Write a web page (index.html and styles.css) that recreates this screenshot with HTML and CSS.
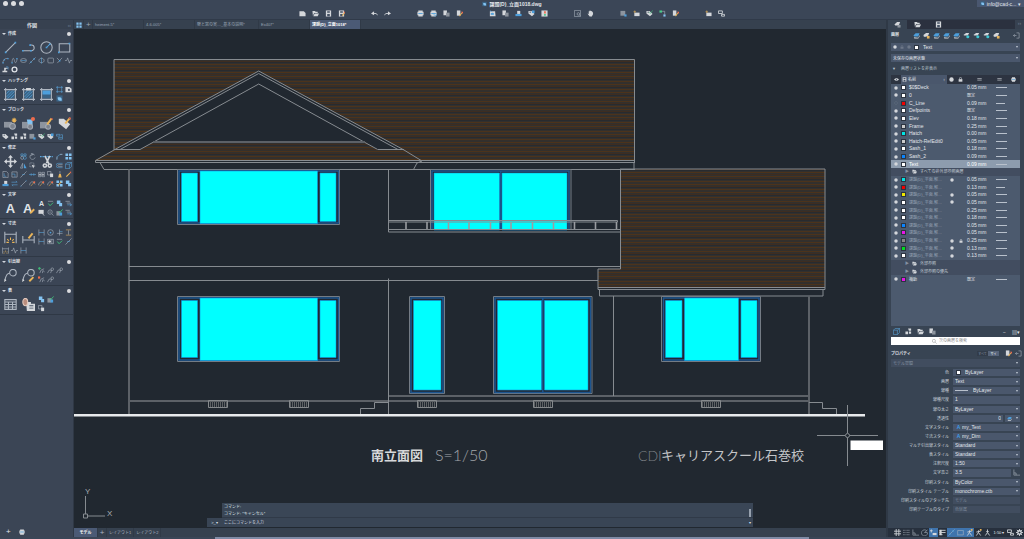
FILE: index.html
```html
<!DOCTYPE html>
<html lang="ja">
<head>
	<meta charset="UTF-8">
	<title>課題(D)_立面1018.dwg</title>
	<link rel="stylesheet" href="styles.css">
	<script src="tools.js" defer></script>
</head>
<body>
<svg class="sprite" aria-hidden="true">
	<!-- draw -->
	<symbol id="line" viewBox="0 0 16 16"><path d="M2 14 14 2"/><path class="bf" d="M1 13h2v2H1zM13 1h2v2h-2z"/></symbol>
	<symbol id="pline" viewBox="0 0 16 16"><path d="M1 12h10.500a3.500 3.500 0 0 0 0-7H10"/><path class="bf" d="M0 11h2v2H0zM9 4h2v2H9zM10 11h2v2h-2z"/></symbol>
	<symbol id="circle" viewBox="0 0 16 16"><circle cx="8" cy="8" r="7"/><path class="b" d="m8 8 4-4"/><path class="bf" d="M7 7h2v2H7zM11 3h2v2h-2z"/></symbol>
	<symbol id="rect" viewBox="0 0 16 16"><path d="M1.500 3.500h13v10h-13z"/><path class="bf" d="M0 13h2v2H0zM13 2h2v2h-2z"/></symbol>
	<symbol id="arc" viewBox="0 0 16 16"><path d="M2 14C2 7 6 3 13 3"/><path class="bf" d="M1 12h3v3H1zM12 2h3v3h-3zM4 5h3v3H4z"/></symbol>
	<symbol id="spline" viewBox="0 0 16 16"><path d="M2 13C4-3 7 4 8 9s4 7 6-5"/><path class="bf" d="M1 12h3v3H1zM12 2h3v3h-3z"/></symbol>
	<symbol id="ellipse" viewBox="0 0 16 16"><ellipse cx="8" cy="8" rx="7" ry="4.500"/><path class="b" d="M2 8h12"/></symbol>
	<symbol id="xline" viewBox="0 0 16 16"><path d="M1 15 15 1"/><path class="bf" d="M3 10h3v3H3zM10 3h3v3h-3z"/></symbol>
	<symbol id="earc" viewBox="0 0 16 16"><path d="M8 3c8 0 8 10 0 10S0 3 8 3"/><path class="b" d="M8 1v14"/></symbol>
	<symbol id="poly" viewBox="0 0 16 16"><path d="M4 2.500h9a2 2 0 0 1 2 2v7a2 2 0 0 1-2 2H4a2 2 0 0 1-2-2v-7a2 2 0 0 1 2-2z"/></symbol>
	<symbol id="ray" viewBox="0 0 16 16"><path d="m2 2 6 6 6-6M8 8l-5 6"/><path class="bf" d="M7 7h3v3H7z"/></symbol>
	<symbol id="zig" viewBox="0 0 16 16"><path d="M0 8h4l2-6 4 12 2-6h4"/></symbol>
	<symbol id="plane" viewBox="0 0 16 16"><path class="wf" d="M5 4h8v2H9l-1 5h4v3H1v-3h4z"/><path class="b" d="M9 2h5v6"/></symbol>
	<symbol id="donut" viewBox="0 0 16 16"><circle class="ringw" cx="8" cy="8" r="5.500"/></symbol>
	<!-- hatch -->
	<symbol id="hatch" viewBox="0 0 16 16"><path class="bd" d="M3 3h10v10H3z"/><path d="M2 0v16M14 0v16M0 2h16M0 14h16"/><path class="b thin" d="m3 7 4-4M3 11l8-8M4 13l9-9M8 13l5-5"/></symbol>
	<symbol id="hatchp" viewBox="0 0 16 16"><use href="#hatch"/><path class="wf" d="M5 0h6v3H5z"/></symbol>
	<symbol id="grad" viewBox="0 0 16 16"><path class="bd" d="M3 3h10v10H3z"/><path class="bf" d="M3 3h10v5H3z"/><path d="M2 0v16M14 0v16M0 2h16M0 14h16"/></symbol>
	<symbol id="bound" viewBox="0 0 16 16"><path class="b" d="M3 0v16M13 0v16M0 3h16M0 13h16"/></symbol>
	<symbol id="wipe" viewBox="0 0 16 16"><path class="wf" d="M1 2h9l5 4v8H1z"/><circle class="df" cx="9" cy="9" r="2.500"/></symbol>
	<symbol id="region" viewBox="0 0 16 16"><path class="bd" d="M1 1h14v14H1z"/><path class="lf" d="M4 5h5a4 4 0 0 1 4 4v4H9a5 5 0 0 1-5-5z"/></symbol>
	<!-- blocks -->
	<symbol id="blk" viewBox="0 0 16 16"><path class="gf" d="M0 6h10v7H0z"/><circle class="gk" cx="10.500" cy="11.500" r="3.500"/><path class="o" d="M12.500 1v6M9.500 4h6M10.500 2l4 4M14.500 2l-4 4"/></symbol>
	<symbol id="blkc" viewBox="0 0 16 16"><path class="gf" d="M0 6h9v8H0z"/><path class="lf" d="M6 3h7v8l-3 3H8z"/><circle class="gk" cx="10" cy="12" r="3"/><circle class="rf" cx="13.500" cy="2.500" r="2.500"/></symbol>
	<symbol id="blke" viewBox="0 0 16 16"><path class="gf" d="M0 6h10v8H0z"/><circle class="gk" cx="10" cy="12" r="3"/><path class="o pen" d="m9 9 5-7"/><path class="rf" d="m13 1 3 1-1 2z"/></symbol>
	<symbol id="tage" viewBox="0 0 16 16"><path class="wf" d="M1 2h6l8 7-5 6-9-7z"/><path class="o pen" d="m9 8 5-6"/><path class="rf" d="m13 0 3 1-1 3z"/></symbol>
	<symbol id="tag" viewBox="0 0 16 16"><path class="wf" d="M1 2h7l7 7-6 5-8-6z"/><circle class="df" cx="5" cy="5" r="1.500"/></symbol>
	<symbol id="tags" viewBox="0 0 16 16"><path class="wf" d="M7 1h7v5H9zM1 8h6v6H1zM9 8h5v5H9z"/></symbol>
	<symbol id="blkp" viewBox="0 0 16 16"><path class="gf" d="M1 2h11v11H1z"/><path class="bf" d="M10 10h5v5h-5z"/></symbol>
	<symbol id="tagg" viewBox="0 0 16 16"><use href="#tag"/><path class="g" d="m7 5 3 3 5-7"/></symbol>
	<symbol id="tagb" viewBox="0 0 16 16"><use href="#tag"/><path class="bf" d="M9 1h6v6H9z"/></symbol>
	<symbol id="rel" viewBox="0 0 16 16"><path class="b" d="M1 3h8v4H1zM6 10h9v4H6zM11 4h4v6"/></symbol>
	<!-- modify -->
	<symbol id="move" viewBox="0 0 16 16"><path class="w2" d="M8 2v12M2 8h12"/><path class="wf" d="m8 0 3 3.500H5zM8 16l3-3.500H5zM0 8l3.500-3v6zM16 8l-3.500-3v6z"/></symbol>
	<symbol id="copy" viewBox="0 0 16 16"><circle cx="5" cy="11" r="3.500"/><circle class="b" cx="11" cy="11" r="3.500"/><path class="b" d="M2 2h5v4H2zM9 2h5v4H9z"/></symbol>
	<symbol id="rot" viewBox="0 0 16 16"><path d="M13 5a6 6 0 1 0 1 5M4 0l6 3-6 3"/></symbol>
	<symbol id="mirror" viewBox="0 0 16 16"><path d="M6 3v11H1z"/><path class="bf" d="M9 3v11h6z"/></symbol>
	<symbol id="stretch" viewBox="0 0 16 16"><path class="dash" d="M2 2h9v9H2z"/><path class="wf" d="m6 6 9 3-4 1-1 5z"/></symbol>
	<symbol id="cut" viewBox="0 0 16 16"><path class="b dash" d="M0 2h16"/><path class="w2" d="M6 1l5 10M12 1 8 10"/><circle class="w2" cx="6" cy="13" r="2"/><circle class="w2" cx="12" cy="13" r="2"/></symbol>
	<symbol id="fillet" viewBox="0 0 16 16"><path class="b" d="M2 15C2 7 6 3 14 3"/><path d="M2 8v7M9 3h6"/></symbol>
	<symbol id="array" viewBox="0 0 16 16"><path class="lf" d="M1 1h6v6H1zM9 1h6v6H9zM1 9h6v6H1zM9 9h6v6H9z"/></symbol>
	<symbol id="offset" viewBox="0 0 16 16"><path class="b" d="M15 3H5a5 5 0 0 0 0 10h10"/><path d="M15 6H6a2 2 0 0 0 0 4h9"/></symbol>
	<symbol id="box" viewBox="0 0 16 16"><path class="b" d="M1 5h9v10H1zM1 5l4-4h10v9l-5 5M10 5l5-4"/></symbol>
	<symbol id="scale" viewBox="0 0 16 16"><path d="M2 2h12v12H2z"/><path class="b" d="M2 7h7v7"/></symbol>
	<symbol id="doc" viewBox="0 0 16 16"><path d="M2 1h8l4 4v10H2z"/><path class="b" d="M5 5v7h5"/></symbol>
	<symbol id="dots" viewBox="0 0 16 16"><path d="M1 15 15 1"/><path class="b" d="M5 8h6"/></symbol>
	<symbol id="arrows" viewBox="0 0 16 16"><path class="b" d="M0 8h16M5 5v6M11 5v6"/></symbol>
	<symbol id="grp" viewBox="0 0 16 16"><path d="M1 3h6v10H1zM9 3h6v10H9z"/><path class="wf" d="M3 6h3v4H3zM10 6h3v4h-3z"/></symbol>
	<symbol id="grp2" viewBox="0 0 16 16"><path d="M1 1h8v8H1z"/><path class="wf" d="M7 6h7v8H7z"/></symbol>
	<symbol id="brush" viewBox="0 0 16 16"><path d="M9 0v7"/><path class="of" d="M7 7h4l2 8H5z"/></symbol>
	<symbol id="pencil" viewBox="0 0 16 16"><path class="o pen" d="m3 13 8-8"/><path class="rf" d="m10 2 4-1v5z"/></symbol>
	<symbol id="step" viewBox="0 0 16 16"><path class="bf" d="M1 9h14v5H1z"/><path class="wf" d="M5 2h7v7H5z"/></symbol>
	<symbol id="swap" viewBox="0 0 16 16"><path class="b" d="M1 5h13M2 11h13M11 2l3 3M5 14l-3-3"/></symbol>
	<symbol id="pedit" viewBox="0 0 16 16"><path d="M1 12C3 2 10 2 14 10"/><path class="o" d="m4 14 8-9"/><path class="rf" d="M10 3h4v4h-4z"/></symbol>
	<symbol id="arraye" viewBox="0 0 16 16"><use href="#array"/><path class="o pen" d="m5 12 7-8"/></symbol>
	<symbol id="sel" viewBox="0 0 16 16"><path class="lf" d="M2 1h8v8H2zM7 7h7v7H7z"/></symbol>
	<!-- annotate -->
	<symbol id="A" viewBox="0 0 16 16"><text x="8" y="14" text-anchor="middle">A</text></symbol>
	<symbol id="Ae" viewBox="0 0 16 16"><text x="7" y="14" text-anchor="middle">A</text><path class="o pen" d="m10 14 5-5"/></symbol>
	<symbol id="check" viewBox="0 0 16 16"><path d="M2 3h12"/><path class="g w2" d="m3 8 4 5 7-7"/></symbol>
	<symbol id="find" viewBox="0 0 16 16"><circle cx="7" cy="7" r="5"/><path d="m11 11 4 4M5 7h4"/></symbol>
	<symbol id="mag" viewBox="0 0 16 16"><circle cx="6" cy="6" r="5"/><path d="m10 10 5 5"/></symbol>
	<symbol id="just" viewBox="0 0 16 16"><path d="M1 3h10M4 7h9"/><path class="b" d="M5 11h10M11 8l4 3-4 3"/></symbol>
	<symbol id="scan" viewBox="0 0 16 16"><path class="wf" d="M1 2h12v9H1z"/><path class="w2" d="m9 9 5 6"/></symbol>
	<symbol id="green" viewBox="0 0 16 16"><path class="gf" d="M1 5h9v10H1z"/><path class="bf" d="M8 8h6v7H8z"/><path class="g w2" d="m6 5 3 3 6-7"/></symbol>
	<symbol id="dim" viewBox="0 0 16 16"><path d="M1 1v14M15 1v14M1 4h14"/><path class="o" d="M8 8v3M4 10l2 2M12 10l-2 2M3 14h3M10 14h3"/></symbol>
	<symbol id="dime" viewBox="0 0 16 16"><path d="M1 6v9M15 6v9M1 11h14"/><path class="o pen" d="m8 9 5-6"/></symbol>
	<symbol id="dlin" viewBox="0 0 16 16"><path d="M2 1v14M14 1v14"/><path class="b" d="M2 8h12"/></symbol>
	<symbol id="drad" viewBox="0 0 16 16"><circle cx="8" cy="8" r="6.500"/><circle class="bf" cx="8" cy="8" r="2"/></symbol>
	<symbol id="dord" viewBox="0 0 16 16"><path d="M8 1v14M2 10h13"/><path class="b" d="M8 6h7"/></symbol>
	<symbol id="dsp" viewBox="0 0 16 16"><path class="o" d="M2 2h12M2 14h12"/><path d="M8 3v10"/></symbol>
	<symbol id="tol" viewBox="0 0 16 16"><path d="M1 3h14v10H1z"/><circle class="wf" cx="6" cy="8" r="3"/><path d="M11 3v10"/></symbol>
	<!-- leaders, tables -->
	<symbol id="lead" viewBox="0 0 16 16"><circle cx="11" cy="4.500" r="4"/><path d="M1 14C3 6 4 6 7 5"/><path class="wf" d="M0 16l1-4 2 2z"/></symbol>
	<symbol id="leade" viewBox="0 0 16 16"><use href="#lead"/><path class="o pen" d="m9 15 5-5"/></symbol>
	<symbol id="ladd" viewBox="0 0 16 16"><path d="M4 14 7 7l7-3M10 14l1-6 4 3"/><path class="g w2" d="M3 0v7M0 3h7"/></symbol>
	<symbol id="ldel" viewBox="0 0 16 16"><path d="M4 14 7 7l7-3M10 14l1-6 4 3"/><path class="rf" d="M0 1h5v5H0z"/></symbol>
	<symbol id="lal" viewBox="0 0 16 16"><path d="M1 14 5 7h5M8 14l3-7"/><circle cx="12" cy="5" r="3"/></symbol>
	<symbol id="table" viewBox="0 0 16 16"><path d="M1 2h14v12H1zM1 5h14M1 8h14M1 11h14M5.500 5v9M10.500 5v9"/></symbol>
	<symbol id="link" viewBox="0 0 16 16"><path class="wf" d="M5 5h6v2h5v9H6z"/><ellipse class="pk" cx="4" cy="5" rx="3" ry="4.500"/><path class="df" d="M9 9h5v1H9zM9 12h5v1H9z"/></symbol>
	<!-- files and toolbar -->
	<symbol id="new" viewBox="0 0 16 16"><path class="wf" d="M1 3h10l4 4v7H1z"/></symbol>
	<symbol id="open" viewBox="0 0 16 16"><path class="wf" d="M1 2h6l1 2h5v3H5l-3 6zM6 8h10l-3 6H3z"/></symbol>
	<symbol id="save" viewBox="0 0 16 16"><path class="wf" d="M2 1h12v14H2z"/><path class="df" d="M5 3h6v3H5zM5 9h6v5H5z"/></symbol>
	<symbol id="saveas" viewBox="0 0 16 16"><use href="#save"/><path class="o pen" d="m10 13 5-7"/><path class="rf" d="M12 4h4v4z"/></symbol>
	<symbol id="undo" viewBox="0 0 16 16"><path class="w2" d="M5 8h7l3 4"/><path class="wf" d="M0 8l7-5v9z"/></symbol>
	<symbol id="redo" viewBox="0 0 16 16"><path class="w2" d="M11 8H4l-3 4"/><path class="wf" d="m16 8-7-5v9z"/></symbol>
	<symbol id="print" viewBox="0 0 16 16"><path class="wf" d="M3 1h10v3h2v8h-2v3H3v-3H1V4h2z"/><path class="bf" d="M3 7h10v2H3z"/></symbol>
	<symbol id="preview" viewBox="0 0 16 16"><use href="#print"/><circle class="b" cx="12" cy="11" r="3"/></symbol>
	<symbol id="pages" viewBox="0 0 16 16"><path class="wf" d="M1 1h8v11H1z"/><path class="gf" d="M7 6h8v9H7z"/></symbol>
	<symbol id="pagee" viewBox="0 0 16 16"><path class="wf" d="M2 1h8v12H2z"/><path class="o pen" d="m8 14 5-7"/><path class="rf" d="M11 4h5v5z"/></symbol>
	<symbol id="attach" viewBox="0 0 16 16"><path class="wf" d="M2 3h12l1 11H2z"/><path class="bf" d="M4 7h7v4H4z"/><path class="b" d="m2 1 6 4"/></symbol>
	<symbol id="tiles" viewBox="0 0 16 16"><path class="wf" d="M1 1h14v14H1z"/><path class="rf" d="M7 3h4v5H7z"/><path class="gn" d="M7 9h4v4H7z"/></symbol>
	<symbol id="zoomw" viewBox="0 0 16 16"><path d="M1 1h14v14H1z"/><circle cx="10" cy="9" r="3"/><path d="m12 11 3 3"/></symbol>
	<symbol id="hand" viewBox="0 0 16 16"><path class="wf" d="m1 8 3 1V3h2V1h2v1h3v2h2l1 5-3 6H6z"/></symbol>
	<symbol id="star" viewBox="0 0 16 16"><path class="wf" d="M3 6h12v8H3z"/><path class="o" d="M4 1v6M1 4h6"/></symbol>
	<symbol id="nodes" viewBox="0 0 16 16"><path class="gn" d="M1 1h6v5H1z"/><path class="lf" d="M10 10h5v5h-5z"/><path d="M7 3h6v7"/></symbol>
	<symbol id="mon" viewBox="0 0 16 16"><path class="w2" d="M1 2h9v6H1zM8 10h7v4H8z"/></symbol>
	<symbol id="list" viewBox="0 0 16 16"><path class="w2" d="M1 5h14M1 10h14"/></symbol>
	<!-- layers -->
	<symbol id="lay" viewBox="0 0 16 16"><path class="bf" d="M1 8 6 3h9l-3 7H3z"/><path class="wf" d="m2 12 10 1 3-6v3l-3 5H3z"/></symbol>
	<symbol id="layw" viewBox="0 0 16 16"><path class="wf" d="m1 7 6-5h7l-2 6-5 3H2z"/><path class="of" d="M9 9h6v6H9z"/></symbol>
	<symbol id="layg" viewBox="0 0 16 16"><path class="wf" d="m1 8 6-6h7l-3 8H3z"/><path class="gf" d="M8 9h7v6H8z"/></symbol>
	<symbol id="layc" viewBox="0 0 16 16"><path class="wf" d="m1 7 6-5h7l-3 6H3z"/><circle class="cy" cx="11" cy="11" r="3.500"/></symbol>
	<symbol id="dot" viewBox="0 0 16 16"><circle class="wf" cx="8" cy="8" r="7"/></symbol>
	<symbol id="ring" viewBox="0 0 16 16"><circle class="dim" cx="8" cy="8" r="6"/></symbol>
	<symbol id="lock" viewBox="0 0 16 16"><path class="wf" d="M2 7h12v8H2z"/><path class="w2" d="M5 8V4a3 3 0 0 1 6 0v4"/></symbol>
	<symbol id="eye" viewBox="0 0 16 16"><path class="wf" d="M0 8q8-8 16 0-8 8-16 0z"/><circle class="df" cx="8" cy="8" r="2"/></symbol>
	<symbol id="exit" viewBox="0 0 16 16"><path d="M8 2h6v12H8M1 8h7M4 5 1 8l3 3"/></symbol>
	<!-- status bar -->
	<symbol id="grid" viewBox="0 0 16 16"><path class="w2" d="M5 0v16M11 0v16M0 5h16M0 11h16"/></symbol>
	<symbol id="snap" viewBox="0 0 16 16"><path class="dash" d="M0 3h16M0 8h16M0 13h16"/></symbol>
	<symbol id="ortho" viewBox="0 0 16 16"><path d="M2 1v13h14M2 9h5v5"/></symbol>
	<symbol id="polar" viewBox="0 0 16 16"><path d="M13 4a7 7 0 1 0 2 5M8 8l7-6M8 8h7"/></symbol>
	<symbol id="dyn" viewBox="0 0 16 16"><path class="w2" d="M3 1v7M0 4h6"/><path class="wf" d="M6 9h9v5H6z"/></symbol>
	<symbol id="lwt" viewBox="0 0 16 16"><path class="w2" d="M1 3h14M1 8h14M1 13h7"/><path class="wf" d="M1 2h5v12H1z"/></symbol>
	<symbol id="person" viewBox="0 0 16 16"><path class="w2" d="M8 3v5l-5 7M8 8l5 7M3 7l10-2"/><path class="of" d="M11 0h4v4h-4z"/></symbol>
	<symbol id="scaleA" viewBox="0 0 16 16"><path class="w2" d="M8 1v7l-5 7M8 8l5 7M5 6h6"/></symbol>
	<symbol id="gear" viewBox="0 0 16 16"><circle class="ringw" cx="8" cy="8" r="4"/><path class="w2" d="M8 0v3M8 13v3M0 8h3M13 8h3M2 2l3 3M11 11l3 3M2 14l3-3M11 5l3-3"/></symbol>
</svg>

<header class="titlebar">
	<div class="lights"><i></i><i></i><i></i></div>
	<h1><svg><use href="#region"/></svg>課題(D)_立面1018.dwg</h1>
	<button class="user"><svg><use href="#region"/></svg>info@cad-c...<span>▾</span></button>
	<nav class="toolbar">
		<div data-icons="new open save saveas"></div>
		<div data-icons="undo redo"></div>
		<div data-icons="print preview pages pagee"></div>
		<div data-icons="attach pages step tagb tiles"></div>
		<div data-icons="zoomw hand"></div>
		<div data-icons="blkp star tagg nodes pagee"></div>
		<div data-icons="star mon"></div>
	</nav>
</header>

<main>
	<aside class="palette">
		<h2>作図<span>‹‹</span></h2>
		<section><h3>作成</h3><div data-icons="+line +pline +circle +rect arc spline ellipse xline earc poly ray zig plane donut"></div></section>
		<section><h3>ハッチング</h3><div data-icons="+hatch +hatchp +grad bound wipe region"></div></section>
		<section><h3>ブロック</h3><div data-icons="+blk +blkc +blke +tage tag tags tags blkp tagg tagb rel"></div></section>
		<section><h3>修正</h3><div data-icons="+move copy rot +cut fillet array mirror stretch offset box doc scale dots arrows grp grp2 brush pencil step swap line pedit pedit pedit arraye sel"></div></section>
		<section><h3>文字</h3><div data-icons="+A +Ae A check sel just scan find green just"></div></section>
		<section><h3>寸法</h3><div data-icons="+dim +dime dlin drad dord dsp dlin tol check dots dim zig dlin"></div></section>
		<section><h3>引出線</h3><div data-icons="+lead +leade ladd lal lal - ldel lal"></div></section>
		<section><h3>表</h3><div data-icons="+table +link sel green - - grp2"></div></section>
		<footer><button>+</button><button><svg><use href="#print"/></svg></button></footer>
	</aside>

	<div class="workspace">
		<nav class="filetabs">
			<button class="overview"><svg><use href="#array"/></svg></button>
			<button class="add">+</button>
			<button>heiment-5*</button>
			<button>4-6-005*</button>
			<button class="wide">壁と窓の実…_基本の説明*</button>
			<button>Ex407*</button>
			<button class="active">課題(D)_立面1018*</button>
		</nav>

		<div class="canvas">
			<svg class="drawing" viewBox="74 29 812 499" preserveAspectRatio="xMidYMid slice">
				<defs>
					<pattern id="tile" width="20" height="25" patternUnits="userSpaceOnUse">
						<path fill="#33302d" stroke="none" d="M0 0h20v25H0z"/>
						<path stroke="#4c331b" d="M0 1.500h20M0 6.500h20M0 9.500h20M0 14.500h20M0 17.500h20M0 22.500h20"/>
						<path stroke="#282b2f" d="M0 4.500h20M0 12.500h20M0 20.500h20"/>
						<path stroke="#3e2d20" d="M0 3.500h20M0 11.500h20M0 19.500h20M0 24.500h20"/>
					</pattern>
					<pattern id="slats" width="2" height="8" patternUnits="userSpaceOnUse"><path stroke="#5d6164" d="M.5 0v8"/></pattern>
				</defs>

				<!-- roofs -->
				<path class="roof" d="M114 59h521v101H95l19-10z"/>
				<path class="bg" d="m114 150 145-79 145 79h-26l-13-8H153l-13 8z"/>
				<path class="roof" d="M620 169h205v119H598v-19h22z"/>
				<path class="edge" d="M114 150V59.500h520.500V162H634v7.500H104l-4-7M114 150l-18.500 10.500v2H635M95.500 160.500H635"/>
				<path class="edge" d="m114 150 144.700-79L404 150l18 11-5 2-3.500 6.500M120 149.500l138.700-76 139.300 76M140 149.500l118.700-65.500 119 65.500M114 149.500h26M378 149.500h26"/>
				<path class="wall" d="M153 142h212"/>
				<path class="edge" d="M635 169.500H620.500v99.500H598v20.500h227V169H620M598 287.500h227M599.500 289.500v6.500H823v-6.500"/>

				<!-- walls and floors -->
				<path class="wall" d="M129 169.500V414M129 401h680M388 396h421M809 401v13M809 296v106"/>
				<path class="edge" d="M129 266.500h491M129 280.500h469M388.500 169.500V232M388.500 278.500V414M613.500 296v100"/>
				<path class="edge" d="M360.500 414v-5.500h14v-6h14M809 402.500h13.500v6h14v6"/>
				<path class="vent" d="M208.500 400.500h19v7h-19zM289.500 400.500h19v7h-19zM417.500 400.500h19v7h-19zM533.500 400.500h19v7h-19zM701.500 400.500h19v7h-19z"/>

				<!-- bay windows -->
				<path class="frame" d="M177.500 169.500h162v55h-162zM177.500 296.500h162v65h-162zM661.500 296.500h99v65h-99z"/>
				<path class="sash" d="M179 171h159.500v52H179zM179 298h159.500v62H179zM663.500 298h95.500v62h-95.500z"/>
				<g class="glass">
					<path d="M181.500 173h16v48.500h-16zM200 171h117.500v52.500H200zM320 173h16v48.500h-16z"/>
					<path d="M181.500 300.500h16v57h-16zM200 298h117.500v62.500H200zM320 300.500h16v57h-16z"/>
					<path d="M665.500 300.500h16.500v57h-16.500zM684.500 298h54v62.500h-54zM741 300.500h16v57h-16z"/>
				</g>

				<!-- doors -->
				<path class="frame" d="M430.500 230v-60.500h140.500V230M409.500 296.500h35v97h-35zM493.500 296.500h98.500v97h-98.500z"/>
				<path class="sash" d="M432 230v-59h137v59M411 298h32v94.500h-32zM495 298h95.500v94.500H495zM542.800 298v94M500.800 171v59"/>
				<g class="glass">
					<path d="M434 173h65.500v57H434zM502 173h65v57h-65zM413.500 300.500H441v89.500h-27.500z"/>
					<path d="M497.500 300.500h44v89.500h-44zM544.500 300.500H588v89.500h-43.500z"/>
				</g>

				<!-- balcony -->
				<path class="edge" d="M388.500 220.500h229v1.500h-229M388.500 229.500H620M388.500 232H620"/>
				<path class="rail" d="M406 222v7M427 222v7M448.500 222v7M469 222v7M490.500 222v7M511 222v7M532.500 222v7M553.500 222v7M574.500 222v7M595.500 222v7M616.500 222v7"/>

				<path class="ground" d="M74 415.300h791"/>

				<text class="title" x="371" y="460">南立面図</text>
				<text class="stroke" x="435" y="461">S=1/50</text>
				<text class="stroke school" x="638" y="461">CDI</text>
				<text class="credit" x="661" y="460">キャリアスクール石巻校</text>

				<path class="edge" d="M85.500 496v18M87 516h18M83.500 514h4v4h-4z"/>
				<text class="axis" x="85" y="494">Y</text>
				<text class="axis" x="107" y="516">X</text>

				<path class="edge" d="M817 435.500h28M849.500 435.500H878M847.500 405v28M847.500 437.500V466"/>
				<circle class="edge" cx="847.500" cy="435.500" r="2"/>
				<path fill="#fff" stroke="none" d="M850.500 440.500H883V450h-32.500z"/>
			</svg>

			<form class="command">
				<div class="history">コマンド:<br>コマンド: *キャンセル*<i></i></div>
				<button type="button" class="prompt">&gt;_▾</button>
				<div class="entry"><input type="text" placeholder="ここにコマンドを入力" aria-label="コマンド">▾</div>
			</form>
		</div>

		<nav class="layouts">
			<button class="active">モデル</button>
			<button class="add">+</button>
			<button>レイアウト1</button>
			<button>レイアウト2</button>
		</nav>
	</div>

	<aside class="inspector">
		<nav class="tabs">
			<button class="active"><svg><use href="#layg"/></svg></button>
			<button><svg><use href="#open"/></svg></button>
			<button><svg><use href="#save"/></svg></button>
			<span>››</span>
		</nav>

		<div class="layerhead">
			<h2>画層</h2>
			<div data-icons="lay layw lay lay lay layc layc layc layw"></div>
			<button><svg><use href="#exit"/></svg></button>
		</div>
		<div class="combo current">
			<svg><use href="#dot"/></svg><svg class="off"><use href="#lock"/></svg><svg class="off"><use href="#dot"/></svg><i class="sw"></i>
			<select aria-label="現在の画層"><option>Text</option></select>
		</div>
		<div class="combo states"><select aria-label="画層状態"><option>未保存の画層状態</option></select></div>
		<button class="toggle">▼<span>画層リストを非表示</span></button>

		<div class="layers">
			<table>
				<thead>
					<tr>
						<th><svg><use href="#eye"/></svg></th>
						<th class="name"><svg><use href="#save"/></svg> 名前<span>↕</span></th>
						<th><svg><use href="#dot"/></svg></th>
						<th><svg><use href="#lock"/></svg></th>
						<th><svg><use href="#list"/></svg></th>
						<th><svg><use href="#list"/></svg></th>
						<th><svg><use href="#print"/></svg></th>
					</tr>
				</thead>
				<tbody id="layers"></tbody>
			</table>
		</div>
		<div class="layertools">
			<div data-icons="box tags open pages"></div>
			<button>−</button><button>▤▾</button>
		</div>
		<div class="search"><svg><use href="#mag"/></svg><input type="text" placeholder="次の画層を検索" aria-label="画層を検索"></div>

		<div class="prophead">
			<h2>プロパティ</h2>
			<button>すべて</button><button class="on">サイ</button>
			<svg><use href="#pagee"/></svg><svg><use href="#exit"/></svg>
		</div>
		<div class="combo space"><select disabled aria-label="選択"><option>モデル空間</option></select></div>
		<div class="props">
			<label for="p1">色</label><div class="combo"><i class="sw"></i><select id="p1"><option>ByLayer</option></select></div>
			<label for="p2">画層</label><div class="combo"><select id="p2"><option>Text</option></select></div>
			<label for="p3">線種</label><div class="combo"><i class="ln"></i><select id="p3"><option>ByLayer</option></select></div>
			<label for="p4">線種尺度</label><input id="p4" type="text" value="1">
			<label for="p5">線の太さ</label><div class="combo"><select id="p5"><option>ByLayer</option></select></div>
			<label for="p6">透過性</label><div class="alpha"><input id="p6" type="text" value="0"><div class="combo"><svg><use href="#lay"/></svg></div></div>
			<label for="p7">文字スタイル</label><div class="combo"><b>A</b><select id="p7"><option>my_Text</option></select></div>
			<label for="p8">寸法スタイル</label><div class="combo"><b>A</b><select id="p8"><option>my_Dim</option></select></div>
			<label for="p9">マルチ引出線スタイル</label><div class="combo"><select id="p9"><option>Standard</option></select></div>
			<label for="p10">表スタイル</label><div class="combo"><select id="p10"><option>Standard</option></select></div>
			<label for="p11">注釈尺度</label><div class="combo"><select id="p11"><option>1:50</option></select></div>
			<label for="p12">文字高さ</label><div class="pick"><input id="p12" type="text" value="3.5"><svg><use href="#ortho"/></svg></div>
			<label for="p13">印刷スタイル</label><div class="combo"><select id="p13"><option>ByColor</option></select></div>
			<label for="p14">印刷スタイル テーブル</label><div class="combo"><select id="p14"><option>monochrome.ctb</option></select></div>
			<label for="p15">印刷スタイルのアタッチ先</label><input id="p15" type="text" value="モデル" disabled>
			<label for="p16">印刷テーブルのタイプ</label><input id="p16" type="text" value="色従属" disabled>
		</div>
		<div class="status">
			<div data-icons="grid snap ortho polar *dyn lwt *xline *rect *person person scaleA"></div>
			<button class="ratio">1:50 ▾</button>
			<div data-icons="mon gear"></div>
		</div>
	</aside>
</main>
<div class="dock"></div>
</body>
</html>
```

FILE: styles.css
```css
* { box-sizing:border-box; }
body { margin:0; height:100vh; overflow:hidden; display:flex; flex-direction:column; background:#3b4657; color:#e2e6eb; font:5px/6px "Liberation Sans","Noto Sans CJK JP",sans-serif; }
h1, h2, h3 { margin:0; font-weight:bold; font-size:4px; }
button, input, select { margin:0; padding:0; border:0; border-radius:0; background:none; color:inherit; font:inherit; min-width:0; }
button { display:flex; align-items:center; justify-content:center; }
select { appearance:none; }
select:disabled { opacity:1; }
input { outline:0; }
svg { display:block; width:7px; height:7px; fill:none; stroke:#aeb6c1; flex:none; }

/* icon strokes and fills */
.sprite { display:none; }
symbol { stroke-width:1.3px; }
symbol text { font:bold 16px "Liberation Sans",sans-serif; fill:#dfe3e8; stroke:none; }
.w2 { stroke:#cfd3d8; stroke-width:2px; }
.b { stroke:#5aa6de; }
.g { stroke:#3fc379; }
.o { stroke:#e9b458; }
.thin { stroke-width:.8px; }
.pen { stroke-width:2.4px; }
.ringw { stroke:#dfe3e8; stroke-width:3px; }
.dash { stroke-dasharray:2 1; }
.wf { fill:#d4d7db; stroke:none; }
.bf { fill:#4d9fdc; stroke:none; }
.lf { fill:#84c3f1; stroke:none; }
.bd { fill:#3a6385; stroke:none; }
.gf { fill:#8d949e; stroke:none; }
.gk { fill:#7b828d; stroke:#a5abb4; }
.df { fill:#465264; stroke:none; }
.rf { fill:#ee6c4d; stroke:none; }
.of { fill:#e9b458; stroke:none; }
.gn { fill:#4ac98a; stroke:none; }
.cy { fill:#3cc4d0; stroke:none; }
.pk { fill:#b98d7d; stroke:#e3c9bd; }
.dim { stroke:#6d7a8d; }

/* title bar */
.titlebar { height:20px; flex:none; display:grid; grid-template-columns:1fr auto 1fr; grid-template-rows:7px 13px; align-items:center; border-bottom:1px solid #303a49; }
.lights { display:flex; gap:3px; padding-left:3px; }
.lights i { width:5px; height:5px; border-radius:50%; background:#dcdde0; }
.titlebar h1 { display:flex; gap:2px; font-size:5px; align-items:center; }
.titlebar h1 svg { width:5px; height:6px; }
.user { justify-self:end; width:47px; height:7px; gap:2px; background:#4a5770; }
.user svg { width:5px; height:5px; }
.toolbar { grid-column:1 / 4; display:flex; justify-content:center; gap:25px; }
.toolbar div { display:flex; gap:5px; }
.toolbar button { width:8px; }

main { flex:1; min-height:0; display:flex; }

/* tool palette */
.palette { width:74px; flex:none; display:flex; flex-direction:column; background:#3b4555; border-right:1px solid #2f3845; }
.palette h2 { height:9px; padding-right:9px; font:bold 5px/9px "Noto Sans CJK JP",sans-serif; text-align:center; background:#374150; position:relative; }
.palette h2 span { position:absolute; right:2px; color:#778395; }
.palette section { padding-bottom:1px; border-bottom:1px solid #2f3845; }
.palette h3 { height:9px; display:flex; align-items:center; padding:0 2px; }
.palette h3:before { content:""; margin-right:2px; border:2px solid transparent; border-top-color:#d3d8df; border-bottom:0; }
.palette h3:after { content:""; width:4px; height:4px; margin-left:auto; border-radius:50%; background:#dcdde0; }
.palette section div { display:grid; grid-template-columns:repeat(8,9px); grid-auto-rows:9px; grid-auto-flow:row dense; padding-left:1px; }
.palette .big { grid-column:span 2; grid-row:span 2; }
.palette .big svg { width:13px; height:13px; }
.palette footer { margin-top:auto; display:flex; gap:8px; height:10px; padding-left:6px; font-size:8px; }
.palette footer svg { width:6px; height:6px; }

/* drawing area */
.workspace { flex:1; min-width:0; display:flex; flex-direction:column; }
.filetabs { height:9px; flex:none; display:flex; background:#36414f; color:#99a5b5; font-size:4px; }
.filetabs button { width:51px; padding-left:2px; justify-content:flex-start; border-right:1px solid #303a47; white-space:nowrap; overflow:hidden; }
.filetabs .wide { width:64px; }
.filetabs .active { background:#4b5a75; color:#fff; font-weight:bold; }
.filetabs .overview { width:10px; }
.filetabs .overview svg { width:6px; height:6px; }
.filetabs .add { width:9px; font-size:8px; }
.canvas { flex:1; min-height:0; position:relative; background:#212830; }
.drawing { width:100%; height:100%; }
.roof { fill:url(#tile); stroke:none; }
.bg { fill:#212830; stroke:none; }
.edge { stroke:#868b90; }
.wall { stroke:#5c6167; stroke-width:2px; }
.rail { stroke:#9a9da1; stroke-width:1.6px; }
.vent { fill:url(#slats); stroke:#85898c; }
.frame { stroke:#747c85; }
.sash { stroke:#1d5590; stroke-width:1.5px; }
.glass { fill:#0ff; stroke:#1690e0; stroke-width:.6px; }
.ground { stroke:#e8eaec; stroke-width:2.6px; }
.drawing text { stroke:none; fill:#d6d8da; font-family:"Noto Sans CJK JP",sans-serif; }
.drawing .title { font-size:13px; font-weight:bold; }
.drawing .credit { font-size:13px; fill:#c3c5c8; }
.drawing .stroke { font:300 16px Lato,sans-serif; fill:#a2a6aa; }
.drawing .school { font-size:14px; fill:#7d8186; }
.drawing .axis { font:8px "Liberation Sans",sans-serif; fill:#a9adb2; }
.command { position:absolute; left:133px; right:133px; bottom:1px; display:grid; grid-template-columns:15px 1fr; font-size:4px; line-height:7px; color:#dde2e8; }
.history { grid-column:2; position:relative; padding:0 2px; background:#3a4656; border-bottom:1px solid #303a48; }
.history i { position:absolute; right:2px; top:6px; width:2px; height:8px; background:#96a0ad; }
.prompt, .entry { height:9px; background:#394555; }
.entry { display:flex; align-items:center; padding:0 2px; }
.entry input { flex:1; }
.entry input::placeholder { color:#d3d9e0; }
.layouts { height:9px; flex:none; display:flex; background:#36414f; color:#a9b3c1; font-size:4px; }
.layouts button { padding:0 2px; border-right:1px solid #303a47; }
.layouts .active { width:24px; background:#4b5a75; color:#fff; font-weight:bold; }
.layouts .add { width:9px; padding:0; font-size:8px; }

/* inspector */
.inspector { width:138px; flex:none; display:flex; flex-direction:column; background:#384453; border-left:2px solid #2f3946; }
.inspector > * { flex:none; margin-left:3px; margin-right:4px; }
.inspector .tabs { display:flex; height:9px; margin:0; background:#2b313f; }
.tabs button { width:21px; }
.tabs .active { background:#384453; width:19px; }
.tabs span { width:9px; margin-left:auto; text-align:center; background:#374150; color:#778395; }
.layerhead { display:flex; height:12px; align-items:center; }
.layerhead h2 { width:22px; }
.layerhead div { display:flex; gap:3px; margin-right:auto; }
.combo { display:flex; align-items:center; min-width:0; background:#4a576c; position:relative; padding-left:2px; }
.combo:after { content:""; position:absolute; right:2px; border:1px solid transparent; border-top:2px solid #c4cbd5; border-bottom:0; }
.combo select { flex:1; width:100%; height:100%; line-height:7px; }
.sw { box-sizing:content-box; width:3px; height:3px; background:var(--c,#fff); border:1px solid #2c3440; }
.ln { width:13px; height:1px; margin-right:5px; background:#b9c1cc; }
.current { height:8px; gap:2px; margin-top:2px; }
.current svg { width:4px; height:4px; margin-right:1px; }
.current .off { opacity:.25; }
.current select { padding-left:2px; }
.states { height:8px; margin-top:3px; font-size:4px; }
.toggle { height:13px; gap:5px; justify-content:flex-start; padding-left:1px; font-size:4px; color:#bcc5d0; }
.inspector .layers { flex:1 1 0; min-height:0; overflow:hidden; background:#4c5a6e; }
table { width:100%; height:208px; border-collapse:collapse; table-layout:fixed; }
th, td { padding:0; line-height:7px; white-space:nowrap; overflow:hidden; font-weight:normal; text-align:left; }
th { height:9px; background:#2d3441; }
th svg { width:5px; height:5px; margin:auto; }
th.name svg { display:inline-block; margin:0; vertical-align:-1px; }
th:nth-child(1) { width:10px; }
th:nth-child(2) { width:46px; }
th:nth-child(3), th:nth-child(4) { width:9px; }
th:nth-child(5) { width:28px; }
th.name { background:#4a576c; font-size:4px; padding-left:1px; }
th.name span { float:right; margin-right:2px; }
td svg { width:4px; height:4px; margin:auto; }
td .sw { display:inline-block; margin-right:3px; vertical-align:-1px; }
td:nth-child(5) { padding-left:2px; }
td .ln { display:block; width:13px; margin:0 0 0 3px; }
td .part { width:9px; }
.jp { font-size:4px; }
.xref .jp { color:#93a0b2; }
.sel { background:#8d9cae; color:#fff; }
.group { background:#424d60; font-size:4px; color:#c5cdd7; }
.group td { padding-left:14px; }
.group i { font-style:normal; color:#8390a2; }
.group svg { display:inline-block; width:5px; height:5px; margin:0 3px; vertical-align:-1px; }
.layertools { display:flex; height:11px; align-items:center; gap:6px; }
.layertools div { display:flex; gap:5px; margin:0 auto 0 2px; }
.search { display:flex; align-items:center; justify-content:center; gap:2px; height:8px; background:#fff; }
.search svg { width:5px; height:5px; stroke:#777; }
.search input { width:40px; font-size:4px; color:#555; }
.search input::placeholder { color:#888; }
.prophead { display:flex; height:11px; align-items:center; margin-top:3px; gap:3px; }
.inspector > .prophead { margin-right:2px; }
.prophead h2 { margin-right:auto; }
.prophead button { font-size:3px; height:5px; width:11px; margin-right:-3px; background:#323c4a; color:#8994a4; }
.prophead .on { margin-right:3px; background:#56647a; color:#fff; }
.space { height:8px; font-size:4px; color:#8894a5; background:#414d5f; }
.props { display:grid; grid-template-columns:58px 1fr; grid-auto-rows:1fr; column-gap:4px; height:148px; padding-top:2px; margin-bottom:13px; }
.props label { font-size:4px; line-height:8px; text-align:right; white-space:nowrap; color:#cdd4dd; }
.props > *:not(label) { margin-bottom:2px; }
.props input { width:100%; padding-left:2px; background:#4a576c; line-height:7px; }
.props input:disabled { font-size:4px; background:#414d5f; color:#7e8a9b; }
.props .combo i.sw { margin:0 4px 0 1px; }
.props b { width:7px; color:#3d9be9; text-align:center; }
.alpha, .pick { display:flex; gap:2px; }
.alpha input { text-align:right; padding-right:2px; }
.alpha .combo { width:15px; flex:none; }
.alpha svg { width:5px; height:5px; }
.inspector > .status { display:flex; align-items:center; height:9px; margin:0; padding-left:5px; background:#27303d; }
.status div { display:flex; }
.status button { width:9px; height:9px; }
.status .on { background:#3f74ad; }
.status .ratio { width:18px; font-size:4px; }

.dock { height:2px; flex:none; margin:0 21%; background:#7f8ba6; }
```

FILE: tools.js
```js
// "+" marks a large tool, "*" a pressed one, "-" an empty cell
document.querySelectorAll('[data-icons]').forEach(box => {
	box.innerHTML = box.dataset.icons.split(' ').map(name => {
		if (name === '-') return '<span></span>'
		const cls = name[0] === '+' ? 'big' : name[0] === '*' ? 'on' : ''
		const id = name.replace(/^[+*]/, '')
		return `<button type="button" class="${cls}" title="${id}"><svg><use href="#${id}"/></svg></button>`
	}).join('')
})

// name, colour, lineweight, flags: o = off, p = partial line, s = selected, f = frozen dot, l = locked
const layers = [
	['$0$Deck', '#fff', '0.05 mm', ''],
	['0', '#fff', '既定', ''],
	['C_Line', '#f10000', '0.09 mm', 'op'],
	['Defpoints', '#fff', '既定', 'n'],
	['Elev', '#fff', '0.18 mm', ''],
	['Frame', '#ccc', '0.25 mm', ''],
	['Hatch', '#00e5e5', '0.00 mm', ''],
	['Hatch-RefEdit0', '#ccc', '0.05 mm', ''],
	['Sash_1', '#fff', '0.18 mm', ''],
	['Sash_2', '#0a84ff', '0.09 mm', ''],
	['Text', '#fff', '0.09 mm', 's'],
	'すべての非外部参照画層',
	['', '#00e5e5', '0.05 mm', 'f'],
	['', '#f10000', '0.13 mm', 'p'],
	['', '#f1e800', '0.05 mm', 'f'],
	['', '#fff', '0.05 mm', 'f'],
	['', '#fff', '0.25 mm', ''],
	['', '#fff', '0.18 mm', ''],
	['', '#0a84ff', '0.05 mm', ''],
	['', '#e815e8', '0.05 mm', ''],
	['', '#888', '0.25 mm', 'fl'],
	['', '#00dd20', '0.13 mm', 'f'],
	['', '#fff', '0.13 mm', 'f'],
	'外部参照',
	'外部参照の優先',
	['補助', '#e815e8', '既定', '']
]
const icon = id => `<svg><use href="#${id}"/></svg>`
document.getElementById('layers').innerHTML = layers.map(row => {
	if (typeof row === 'string') return `<tr class="group"><td colspan="7"><i>▶</i>${icon('open')}${row}</td></tr>`
	const [name, color, weight, flags] = row
	const has = f => flags.includes(f)
	const jp = !name || name === '補助'
	return `<tr class="${name ? '' : 'xref'} ${has('s') ? 'sel' : ''}">
		<td>${icon(has('o') ? 'ring' : 'dot')}</td>
		<td><i class="sw" style="--c:${color}"></i><span class="${jp ? 'jp' : ''}">${name || '課題(D)_平面-解…'}</span></td>
		<td>${has('f') ? icon('dot') : ''}</td>
		<td>${has('l') ? icon('lock') : ''}</td>
		<td class="${weight === '既定' ? 'jp' : ''}">${weight}</td>
		<td><i class="ln ${has('p') ? 'part' : ''}"></i></td>
		<td></td></tr>`
}).join('')
```
